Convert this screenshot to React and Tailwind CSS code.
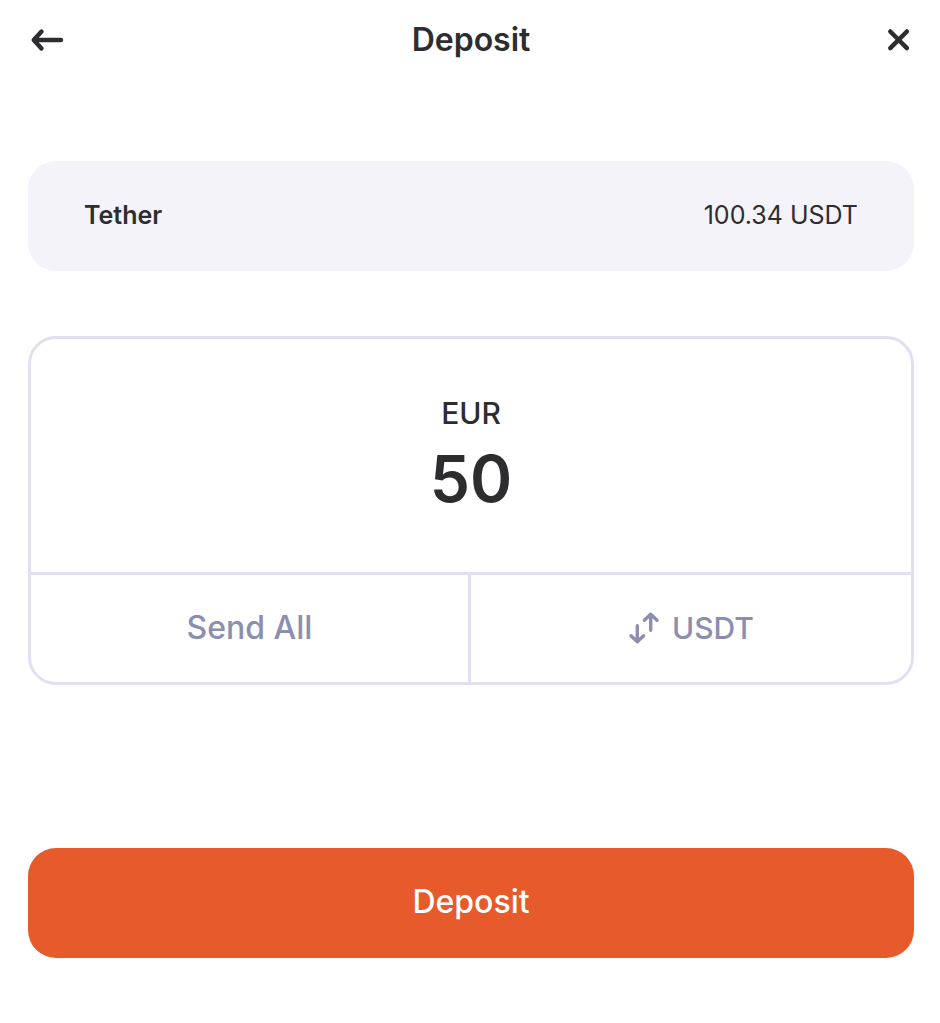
export default function App() {
  return (
    <main className="min-h-screen bg-white pr-[26px] pb-16 pl-7 font-['Inter','Liberation_Sans',sans-serif] text-[#2d2d2f]">
      <header className="flex h-[79px] items-center justify-between">
        <button type="button" aria-label="Back" className="flex w-10 items-center">
          <svg width="38" height="32" viewBox="0 0 38 32" fill="none" stroke="currentColor" strokeWidth="4.400" strokeLinecap="round" strokeLinejoin="round">
            <path d="M33 16H6M13.500 7.500L5.700 16L13.500 24.500" />
          </svg>
        </button>
        <h1 className="text-[32px] font-semibold">Deposit</h1>
        <button type="button" aria-label="Close" className="flex w-10 items-center justify-end">
          <svg width="32" height="32" viewBox="0 0 32 32" fill="none" stroke="currentColor" strokeWidth="4.500" strokeLinecap="round">
            <path d="M8.300 7.500L24.900 24.100M24.900 7.500L8.300 24.100" />
          </svg>
        </button>
      </header>

      <section className="mt-[82px] flex h-[110px] items-center justify-between rounded-[28px] bg-[#f4f3f9] px-14 text-[25px]">
        <span className="font-semibold">Tether</span>
        <span>100.34 USDT</span>
      </section>

      <section className="mt-[65px] rounded-[28px] border-3 border-[#e2e0f0]">
        <label className="flex h-[233px] flex-col items-center pt-14">
          <span className="text-3xl/9 font-medium">EUR</span>
          <input type="text" inputMode="decimal" defaultValue="50" className="w-full bg-transparent text-center text-[64px] leading-24 font-semibold outline-none" />
        </label>
        <div className="grid h-[110px] grid-cols-2 border-t-3 border-[#e2e0f0] font-medium text-[#8b8eaf]">
          <button type="button" className="border-r-3 border-[#e2e0f0] pb-0.5 text-[32px]">Send All</button>
          <button type="button" className="flex items-center justify-center gap-3 pb-0.5 text-3xl">
            <svg width="32" height="34" viewBox="0 0 32 34" fill="none" stroke="currentColor" strokeWidth="3.400" strokeLinecap="round" strokeLinejoin="round" aria-hidden="true">
              <path d="M9.300 14.800V30.500M3 24.700L9.300 30.800L15.600 24.700" />
              <path d="M22.700 19.300V3.500M16.400 9.300L22.700 3.200L29 9.300" />
            </svg>
            USDT
          </button>
        </div>
      </section>

      <button type="button" className="mt-[163px] h-[110px] w-full rounded-[28px] bg-[#e75a2b] pb-0.5 text-[32px] font-medium text-white">Deposit</button>
    </main>
  );
}
